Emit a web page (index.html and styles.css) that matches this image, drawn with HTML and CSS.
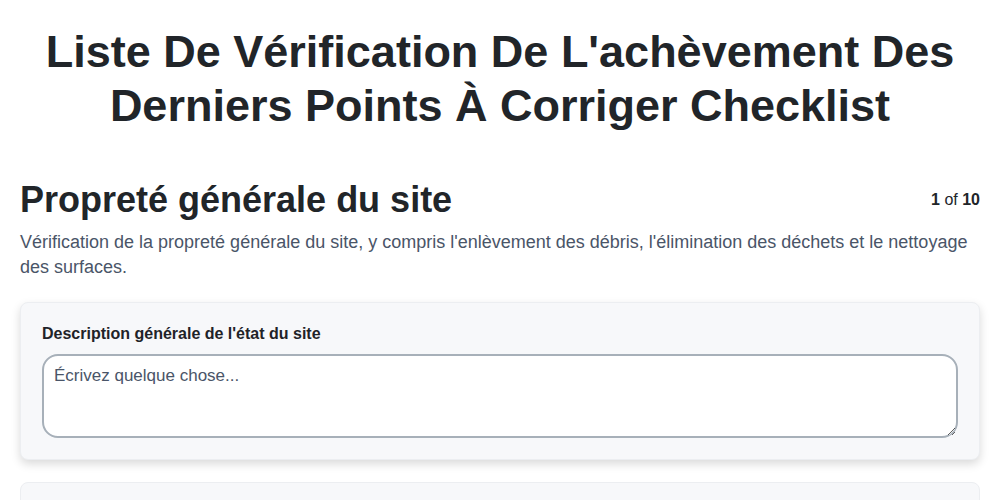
FILE: index.html
```html
<!DOCTYPE html>
<html lang="fr">
<head>
<meta charset="utf-8">
<title>Checklist</title>
<link rel="stylesheet" href="styles.css">
</head>
<body>
<div class="page">
  <h1 class="title">Liste De Vérification De L'achèvement Des Derniers Points À Corriger Checklist</h1>
  <div class="section-head">
    <h2 class="section-title">Propreté générale du site</h2>
    <div class="counter"><b>1</b> of <b>10</b></div>
  </div>
  <p class="section-desc">Vérification de la propreté générale du site, y compris l'enlèvement des débris, l'élimination des déchets et le nettoyage des surfaces.</p>
  <div class="card">
    <label class="field-label" for="desc">Description générale de l'état du site</label>
    <textarea id="desc" class="field-input" placeholder="Écrivez quelque chose..."></textarea>
  </div>
  <div class="card card-next"></div>
</div>
</body>
</html>
```
FILE: styles.css
```css
* { box-sizing: border-box; }
html, body { margin: 0; padding: 0; background: #fff; }
body { font-family: "Liberation Sans", Arial, sans-serif; color: #1f2328; }
.page { padding: 25px 20px 0 20px; }
.title {
  margin: 0;
  text-align: center;
  font-size: 45px;
  line-height: 54px;
  font-weight: 700;
  color: #212529;
}
.section-head {
  display: flex;
  justify-content: space-between;
  align-items: center;
  margin-top: 45px;
}
.section-title {
  margin: 0;
  font-size: 36px;
  line-height: 44px;
  font-weight: 700;
  color: #212529;
}
.counter { font-size: 16px; color: #212529; }
.counter b { font-weight: 700; }
.section-desc {
  margin: 8px 0 0 0;
  font-size: 18px;
  line-height: 25px;
  color: #4a5568;
}
.card {
  margin-top: 22px;
  background: #f7f8fa;
  border: 1px solid #eceef1;
  border-radius: 8px;
  box-shadow: 0 4px 10px rgba(0,0,0,0.15);
  padding: 21px 21px 21px 21px;
}
.field-label {
  display: block;
  font-size: 16px;
  font-weight: 700;
  line-height: 20px;
  color: #1f2328;
  margin-bottom: 10px;
}
.field-input {
  display: block;
  width: 100%;
  height: 84px;
  border: 2px solid #a7b0b9;
  border-radius: 16px;
  background: #fff;
  padding: 10px 10px;
  font-family: "Liberation Sans", Arial, sans-serif;
  font-size: 17px;
  line-height: 20px;
  color: #1f2328;
  resize: vertical;
}
.field-input::placeholder { color: #4a5568; opacity: 1; }
.card-next { height: 60px; box-shadow: none; }
```
